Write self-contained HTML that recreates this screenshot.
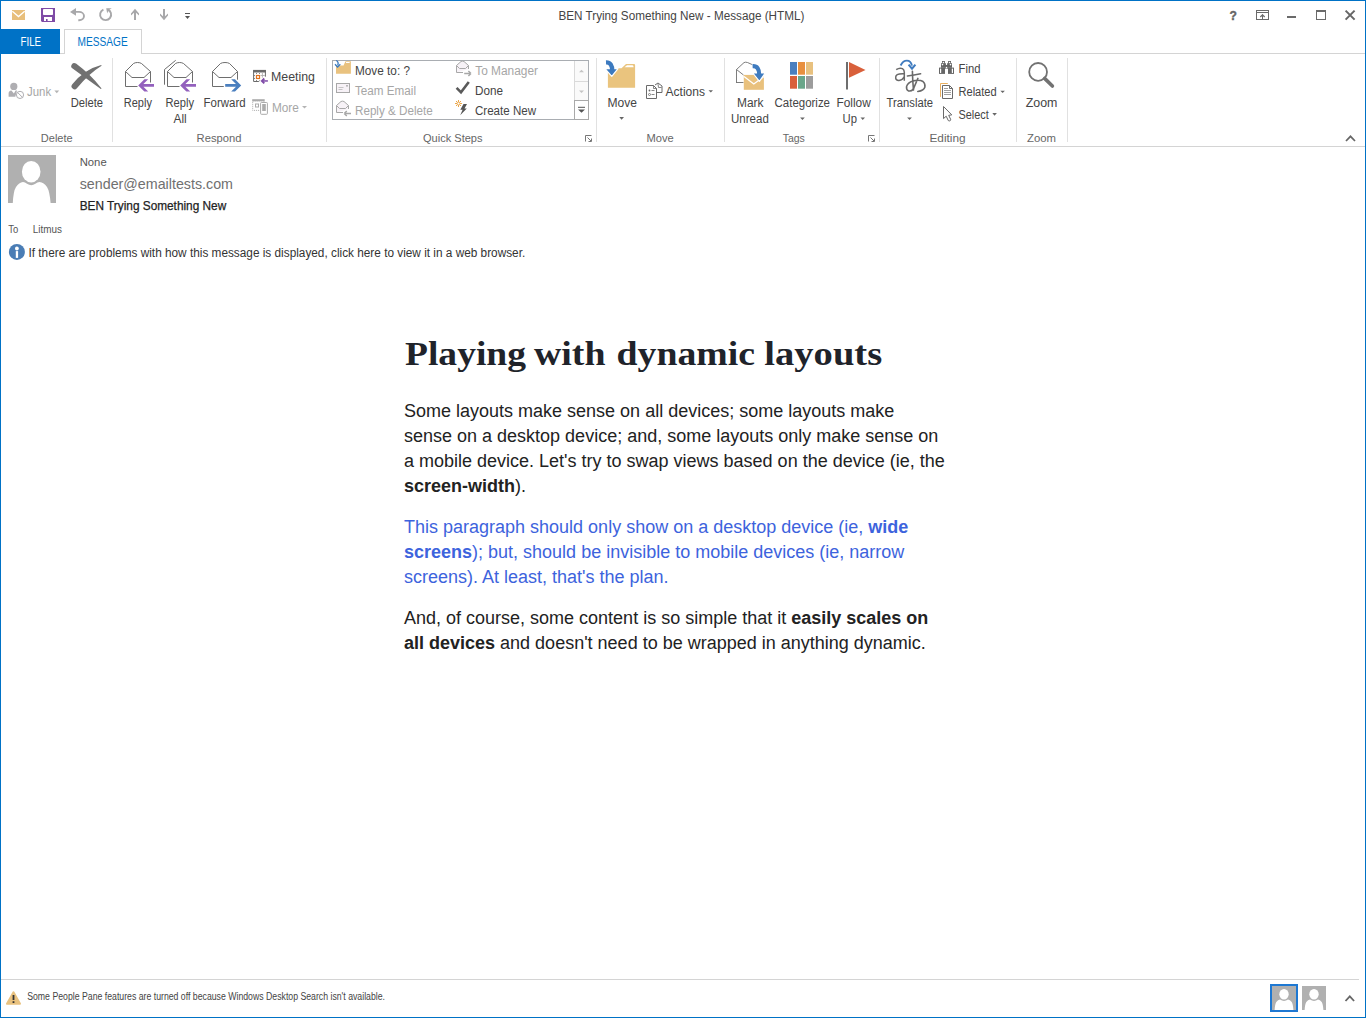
<!DOCTYPE html>
<html><head><meta charset="utf-8">
<style>
*{margin:0;padding:0;box-sizing:border-box}
html,body{width:1366px;height:1018px;overflow:hidden;background:#fff}
body{font-family:"Liberation Sans",sans-serif;position:relative;color:#444}
.a{position:absolute;white-space:nowrap}
.win{position:absolute;left:0;top:0;width:1366px;height:1018px;border:1px solid #0072c6}
.t12{font-size:12px;line-height:14px}
.dis{color:#a8a8a8}
.lbl{color:#666;font-size:12px;line-height:14px}
.sep{position:absolute;width:1px;background:#e1e1e1}
svg{position:absolute;overflow:visible}
</style></head><body>
<div class="win"></div>

<!-- ===== Title bar ===== -->

<!-- ===== Tabs ===== -->
<div class="a" style="left:1px;top:29px;width:59px;height:25px;background:#0072c6"></div>
<div class="a" style="left:64px;top:29px;width:78px;height:25px;border:1px solid #d4d4d4;border-bottom:none;background:#fff"></div>
<div class="a" style="left:60px;top:53px;width:4px;height:1px;background:#d4d4d4"></div>
<div class="a" style="left:142px;top:53px;width:1223px;height:1px;background:#d4d4d4"></div>

<!-- ===== Ribbon ===== -->
<div class="a" style="left:1px;top:146px;width:1364px;height:1px;background:#d4d4d4"></div>

<!-- ===== Message header ===== -->

<!-- ===== Body ===== -->
<div class="a" id="body" style="left:404px;top:330px;width:560px;white-space:normal">
<div id="p1" class="a" style="left:0;top:69px;font-size:18px;line-height:25px;color:#222">Some layouts make sense on all devices; some layouts make<br>sense on a desktop device; and, some layouts only make sense on<br>a mobile device. Let's try to swap views based on the device (ie, the<br><b>screen-width</b>).</div>
<div id="p2" class="a" style="left:0;top:185px;font-size:18px;line-height:25px;color:#3d63dd">This paragraph should only show on a desktop device (ie, <b>wide</b><br><b>screens</b>); but, should be invisible to mobile devices (ie, narrow<br>screens). At least, that's the plan.</div>
<div id="p3" class="a" style="left:0;top:276px;font-size:18px;line-height:25px;color:#222">And, of course, some content is so simple that it <b>easily scales on</b><br><b>all devices</b> and doesn't need to be wrapped in anything dynamic.</div>
</div>

<!-- ===== Footer ===== -->
<div class="a" style="left:1px;top:979px;width:1358px;height:1px;background:#d4d4d4"></div>

<!--ICONS-->
<svg width="1366" height="1018" style="left:0;top:0">
<!-- QAT mail -->
<rect x="12" y="10" width="13" height="10" fill="#e8bf7c"/>
<path d="M12.3 11.3 L18.5 16.6 L24.7 11.3" fill="none" stroke="#fff" stroke-width="1.3"/>
<!-- QAT save -->
<path d="M41 8 H55 V22 H42 L41 21 Z" fill="#7f4ba6"/>
<rect x="43" y="9" width="10" height="6" rx="0.8" fill="#fff"/>
<rect x="44" y="17" width="8" height="4" fill="#fff"/>
<rect x="46" y="19" width="1.6" height="2" fill="#7f4ba6"/>
<!-- undo -->
<path d="M72 11.9 H79 A5 4.2 0 0 1 79 20.3 H78.3" fill="none" stroke="#a8a8aa" stroke-width="1.9"/>
<path d="M70 11.9 L76 8 V15.8 Z" fill="#a8a8aa"/>
<!-- redo -->
<path d="M103.4 9.6 A5.5 5.5 0 1 0 107.6 9.5" fill="none" stroke="#a8a8aa" stroke-width="1.9"/>
<path d="M106.2 8.2 H111.8 L108.5 10.2 L107.2 13.6 Z" fill="#a8a8aa"/>
<!-- up -->
<path d="M135 10 V20" stroke="#a8a8aa" stroke-width="2"/>
<path d="M135 8.8 L139 13.6 V15.6 L135 11.8 L131 15.6 V13.6 Z" fill="#a8a8aa"/>
<!-- down -->
<path d="M164 9 V19" stroke="#a8a8aa" stroke-width="2"/>
<path d="M164 20.2 L168 15.4 V13.4 L164 17.2 L160 13.4 V15.4 Z" fill="#a8a8aa"/>
<!-- customize -->
<rect x="185" y="13" width="5" height="1" fill="#555"/>
<path d="M185 16 H190 L187.5 19 Z" fill="#555"/>
<!-- help ? -->
<text x="1229.6" y="20" font-family="Liberation Sans" font-weight="bold" font-size="13.5" fill="#666" stroke="#666" stroke-width="0.4" textLength="7.4" lengthAdjust="spacingAndGlyphs">?</text>
<!-- ribbon display -->
<rect x="1256.5" y="10.5" width="12" height="9" fill="none" stroke="#6a6a6a" stroke-width="1"/>
<path d="M1256.5 12.5 H1268.5" stroke="#6a6a6a" stroke-width="1"/>
<path d="M1262.5 14.5 V19.5" stroke="#6a6a6a" stroke-width="1"/>
<path d="M1260.3 17 L1262.5 14.8 L1264.7 17" fill="none" stroke="#6a6a6a" stroke-width="1.2"/>
<!-- minimize -->
<rect x="1287" y="16" width="9" height="2" fill="#6a6a6a"/>
<!-- maximize -->
<rect x="1316.5" y="10.5" width="9" height="9" fill="none" stroke="#6a6a6a" stroke-width="1"/>
<rect x="1316" y="10" width="10" height="2" fill="#6a6a6a"/>
<!-- close -->
<path d="M1345.6 10.6 L1354.6 19.6 M1354.6 10.6 L1345.6 19.6" stroke="#666" stroke-width="2"/>
<!-- ribbon separators -->
<rect x="112" y="58" width="1" height="84" fill="#e1e1e1"/>
<rect x="326" y="58" width="1" height="84" fill="#e1e1e1"/>
<rect x="596" y="58" width="1" height="84" fill="#e1e1e1"/>
<rect x="724" y="58" width="1" height="84" fill="#e1e1e1"/>
<rect x="879" y="58" width="1" height="84" fill="#e1e1e1"/>
<rect x="1016" y="58" width="1" height="84" fill="#e1e1e1"/>
<rect x="1067" y="58" width="1" height="84" fill="#e1e1e1"/>
<!-- Junk -->
<circle cx="13.8" cy="86.4" r="3.6" fill="#afaeb2"/>
<path d="M8.6 96.8 V93.6 Q8.6 90.6 11.4 90.4 L13.9 93.6 L15.6 90.6 H17 L15.3 96.8 Z" fill="#afaeb2"/>
<circle cx="20" cy="94.9" r="3.6" fill="#fff" stroke="#afaeb2" stroke-width="1"/>
<path d="M17.5 92.4 L22.5 97.4" stroke="#afaeb2" stroke-width="1"/>
<path d="M54.4 90.6 H59.2 L56.8 93.2 Z" fill="#b4b4b4"/>
<!-- Delete X -->
<path d="M76 63.6 Q90 74 101.6 88.4 L100.8 89 Q87 79.2 72.6 68.6 A2.7 2.7 0 0 1 76 63.6 Z" fill="#717171"/>
<path d="M72.3 84.3 Q84 69.3 101.2 64.9 L101.6 65.7 Q88.5 73.8 76.9 88.3 A2.8 2.8 0 0 1 72.3 84.3 Z" fill="#717171"/>
<!-- Reply -->
<g fill="none" stroke="#6e6e6e" stroke-width="1">
<path d="M125.5 86.5 V71.5 L133.5 63.5 Q135 62.5 137.5 62.5 Q140 62.5 141.5 63.5 L150.5 71.5 V82.5"/>
<path d="M125.5 71.5 L132 77.5 H144 L150.5 71.5"/>
<path d="M125.5 86.5 H137.5"/>
</g>
<path d="M138.2 85.4 L144.4 79.2 H148.2 L143.4 84 H154 V86.8 H143.4 L148.2 91.6 H144.4 Z" fill="#9360bd"/>
<!-- Reply All -->
<g fill="none" stroke="#6e6e6e" stroke-width="1">
<path d="M167.5 86.5 V71.5 L175.5 63.5 Q177 62.5 179.5 62.5 Q182 62.5 183.5 63.5 L192.5 71.5 V82.5"/>
<path d="M167.5 71.5 L174 77.5 H186 L192.5 71.5"/>
<path d="M167.5 86.5 H179.5"/>
<path d="M164.5 84.7 V69.5 L175.7 60.3"/>
</g>
<path d="M180.2 85.4 L186.4 79.2 H190.2 L185.4 84 H196 V86.8 H185.4 L190.2 91.6 H186.4 Z" fill="#9360bd"/>
<!-- Forward -->
<g fill="none" stroke="#6e6e6e" stroke-width="1">
<path d="M212.5 86.5 V71.5 L220.5 63.5 Q222 62.5 225 62.5 Q228 62.5 229.5 63.5 L237.5 71.5 V79.7"/>
<path d="M212.5 71.5 L219 77.5 H231 L237.5 71.5"/>
<path d="M212.5 86.5 H223.8"/>
</g>
<path d="M241.2 85.4 L235 79.2 H231.2 L236 84 H225.2 V86.8 H236 L231.2 91.6 H235 Z" fill="#4a7fbf"/>
<!-- Meeting -->
<path d="M253.6 81.5 V70.5 H265.4 V76.7" fill="none" stroke="#6a6a6a" stroke-width="1"/>
<rect x="253.1" y="69.9" width="12.8" height="2.6" fill="#6a6a6a"/>
<path d="M253.6 81.5 H258.8 L259.8 80.4" fill="none" stroke="#6a6a6a" stroke-width="1"/>
<g fill="#8a8a8a">
<rect x="256" y="73" width="1" height="1"/><rect x="259" y="73" width="1" height="1"/>
<rect x="254" y="75" width="1" height="1"/><rect x="254" y="78" width="1" height="1"/>
<rect x="256" y="80" width="1" height="1"/>
</g>
<path d="M262.4 73 V77.6 M260.6 75.5 H264.8" stroke="#b0b0b0" stroke-width="0.9"/>
<rect x="256.5" y="75.5" width="3" height="3" fill="none" stroke="#e2711d" stroke-width="1.2"/>
<path d="M264.3 78.5 L261.9 80.95 L264.3 83.4" fill="none" stroke="#7f4ba8" stroke-width="1.9" stroke-linejoin="miter"/>
<rect x="262.6" y="80.2" width="5.3" height="1.5" fill="#7f4ba8"/>
<!-- More -->
<rect x="252.2" y="99.2" width="12.5" height="2" fill="#ababab"/>
<rect x="252.7" y="101" width="11.5" height="9.4" fill="none" stroke="#ababab" stroke-width="1" stroke-dasharray="1 1"/>
<rect x="255.5" y="104" width="3" height="3" fill="none" stroke="#ababab" stroke-width="1"/>
<rect x="260.6" y="102.5" width="6.8" height="11.8" rx="0.8" fill="#fff" stroke="#ababab" stroke-width="1"/>
<rect x="262.2" y="104" width="3.6" height="7" fill="#ababab"/>
<path d="M302 106 H307 L304.5 108.6 Z" fill="#b4b4b4"/>
<!-- Quick steps gallery -->
<rect x="332.5" y="60.5" width="256" height="59" fill="none" stroke="#a9adb2" stroke-width="1"/>
<rect x="575" y="61" width="13" height="39" fill="#fafafa"/>
<path d="M574.5 61 V100" stroke="#dadada" stroke-width="1"/>
<path d="M575 81.5 H588" stroke="#dadada" stroke-width="1"/>
<rect x="574.5" y="100.5" width="14" height="19" fill="#fff" stroke="#a9a9a9" stroke-width="1"/>
<path d="M579 72.2 L581.5 69.7 L584 72.2 Z" fill="#c4c4c4"/>
<path d="M579 90.5 H584 L581.5 93 Z" fill="#c4c4c4"/>
<rect x="578" y="106.8" width="7" height="1" fill="#555"/>
<path d="M578 109.5 H585 L581.5 112.8 Z" fill="#555"/>
<!-- launcher QS -->
<path d="M585.5 141.5 V135.5 H591.5" fill="none" stroke="#777" stroke-width="1"/>
<path d="M587.5 137.5 L591 141 M591.5 138.5 V141.5 H588.5" fill="none" stroke="#777" stroke-width="1"/>
<!-- Move to: ? icon -->
<path d="M336 73.7 V65.5 H343.5 L345.5 61.2 H350.9 V73.7 Z" fill="#e9c27f"/>
<rect x="346" y="62" width="3.6" height="1" fill="#fff"/>
<path d="M336 60.5 Q339 61.5 337.8 65.3" fill="none" stroke="#3a7ac0" stroke-width="1.3"/>
<path d="M335 64.2 L337.6 67 L340.3 64.2" fill="none" stroke="#3a7ac0" stroke-width="1.3"/>
<!-- Team Email icon -->
<rect x="336.5" y="83.5" width="13" height="9" fill="#f7f2f7" stroke="#a8a8a8" stroke-width="1"/>
<path d="M338.5 87.5 H343.5 M338.5 89.5 H342.5" stroke="#b8b8b8" stroke-width="0.8"/>
<rect x="346.2" y="85" width="1.6" height="1.6" fill="#a8a8a8"/>
<!-- Reply & Delete icon -->
<path d="M336.5 112.5 V105.5 L341 101.5 Q342.5 100.8 344 101.5 L348.5 105.5 V109" fill="#f7f2f7" stroke="#a8a8a8" stroke-width="1"/>
<path d="M336.5 105.5 L339.5 108.5 H345.5 L348.5 105.5" fill="none" stroke="#a8a8a8" stroke-width="1"/>
<path d="M336.5 112.5 H343" stroke="#a8a8a8" stroke-width="1"/>
<path d="M344.2 113.5 L346.8 111 M344.2 113.5 L346.8 116 M344.8 113.5 H351" fill="none" stroke="#a8a8a8" stroke-width="1.5"/>
<!-- To Manager icon -->
<path d="M456.5 72.5 V65.5 L461 61.5 Q462.5 60.8 464 61.5 L468.5 65.5 V69" fill="#f7f2f7" stroke="#a8a8a8" stroke-width="1"/>
<path d="M456.5 65.5 L459.5 68.5 H465.5 L468.5 65.5" fill="none" stroke="#a8a8a8" stroke-width="1"/>
<path d="M456.5 72.5 H463" stroke="#a8a8a8" stroke-width="1"/>
<path d="M471 73.5 L468.4 71 M471 73.5 L468.4 76 M470.4 73.5 H464.2" fill="none" stroke="#a8a8a8" stroke-width="1.5"/>
<!-- Done -->
<path d="M456.6 87.8 L461 92.3 L468.8 82" fill="none" stroke="#5a5a5a" stroke-width="2.6"/>
<!-- Create New -->
<g stroke="#eaa64a" stroke-width="1">
<path d="M458.5 100 V107 M455 103.5 H462 M456 101 L461 106 M461 101 L456 106"/>
</g>
<circle cx="458.5" cy="103.5" r="1.5" fill="#fff" stroke="#eaa64a" stroke-width="0.9"/>
<path d="M463.5 104 H467 L464.5 108.5 H466.8 L460.2 115.2 L462.6 109.8 H460.3 Z" fill="#555"/>
<!-- Move icon -->
<path d="M607.9 87.8 V68.3 H621.5 L626 63.9 H634 Q635.1 63.9 635.1 65 V87.8 Z" fill="#eac47e"/>
<path d="M624.5 67.3 L627 65.2 H632.5 Q633.5 65.4 633.6 67.3 Z" fill="#fff"/>
<path d="M605.5 62 Q613.5 61.7 613.3 69.5" fill="none" stroke="#fff" stroke-width="6.4"/>
<path d="M605 68.6 L611.8 76.4 L618 68.6 Z" fill="#3c7abf" stroke="#fff" stroke-width="1.2" stroke-linejoin="round"/>
<path d="M606 62.4 Q612.4 62.2 612.2 71" fill="none" stroke="#3c7abf" stroke-width="4.4"/>
<path d="M619.3 117 H624 L621.6 119.7 Z" fill="#666"/>
<!-- Actions icon -->
<path d="M655 85 L658 83 L662 86 V92.5 H657" fill="none" stroke="#6a6a6a" stroke-width="1"/>
<path d="M658 84 L658.5 87.5 H661.5" fill="none" stroke="#6a6a6a" stroke-width="0.8"/>
<path d="M646.5 98.5 V85.5 H653.5 L656.5 88.5 V98.5 Z" fill="#fff" stroke="#6a6a6a" stroke-width="1"/>
<path d="M653.5 85.5 V88.5 H656.5" fill="none" stroke="#6a6a6a" stroke-width="0.8"/>
<circle cx="649.5" cy="90.5" r="0.9" fill="#6a6a6a"/>
<circle cx="649.5" cy="94.5" r="1" fill="none" stroke="#6a6a6a" stroke-width="0.8"/>
<path d="M651.5 90.5 H654.5 M651.5 94.5 H654.5" stroke="#6a6a6a" stroke-width="0.8"/>
<path d="M708.5 90.3 H713 L710.8 92.6 Z" fill="#666"/>
<!-- Mark Unread -->
<path d="M736.5 83 V69.5 L744 62.6 Q745.5 61.8 747.5 62.5 L752 64.5" fill="none" stroke="#6e6e6e" stroke-width="0.9"/>
<path d="M736.5 69.5 L743.5 75" fill="none" stroke="#6e6e6e" stroke-width="0.9"/>
<path d="M736.5 82.5 H743.5" stroke="#6e6e6e" stroke-width="0.9"/>
<rect x="743.8" y="74.9" width="20.1" height="14.9" fill="#e9c17d"/>
<path d="M744 76.5 L753.8 84 L764 76.5" fill="none" stroke="#fff" stroke-width="1.3"/>
<path d="M752 65.8 Q760.5 65.4 760 74" fill="none" stroke="#fff" stroke-width="6.2"/>
<path d="M752.8 73 L759.4 81.4 L765.2 73 Z" fill="#3f7bbf" stroke="#fff" stroke-width="1.2" stroke-linejoin="round"/>
<path d="M752.6 66.2 Q759.4 65.8 759.2 75" fill="none" stroke="#3f7bbf" stroke-width="4.2"/>
<!-- Categorize -->
<rect x="790" y="62" width="7" height="12.7" fill="#4a7fbf"/>
<rect x="798" y="62" width="7" height="12.7" fill="#e8903f"/>
<rect x="806" y="62" width="7" height="12.7" fill="#e8c17f"/>
<rect x="790" y="76" width="7" height="12.7" fill="#d9603b"/>
<rect x="798" y="76" width="7" height="12.7" fill="#6aa68a"/>
<rect x="806" y="76" width="7" height="12.7" fill="#9c9c9c"/>
<path d="M800.1 117.5 H804.8 L802.45 120 Z" fill="#666"/>
<!-- Follow up -->
<rect x="846" y="62" width="2" height="27.5" fill="#6e6e6e"/>
<path d="M849 62 L865.5 70 L849 77.7 Z" fill="#d9603b"/>
<path d="M860.5 117.5 H865 L862.75 120 Z" fill="#666"/>
<!-- launcher Tags -->
<path d="M868.5 141.5 V135.5 H874.5" fill="none" stroke="#777" stroke-width="1"/>
<path d="M870.5 137.5 L874 141 M874.5 138.5 V141.5 H871.5" fill="none" stroke="#777" stroke-width="1"/>
<!-- Translate -->
<g fill="none" stroke="#6a6a6a" stroke-width="1.5">
<path d="M896.2 69.6 Q899.5 67.4 902.5 68.6 Q904.3 69.6 904.3 72.2 V80.8"/>
<path d="M904.3 73.8 Q899.2 73.6 897.2 74.6 Q895.3 75.8 895.7 78.2 Q896.3 80.6 899 80.4 Q902.6 80.1 904.3 76.9"/>
</g>
<g fill="none" stroke="#6a6a6a" stroke-width="1.6" stroke-linecap="round">
<path d="M907.4 76 Q914 75.4 920.6 73.8"/>
<path d="M912.4 71.3 Q912.6 81 913.5 90"/>
<path d="M917.9 78.4 L913.2 89.4 Q911 91.6 908.4 90.9 Q906.1 89.7 906.6 86.4 Q907.8 82.3 913 80.9 Q919.5 79.5 923 81.5 Q925.4 83.5 924.9 87 Q924 90.6 917.8 91.5"/>
</g>
<path d="M900.6 65.5 Q903 60.6 906.9 60.6 Q910.8 60.6 912 65.6" fill="none" stroke="#3f7bbf" stroke-width="1.9"/>
<path d="M908.6 64.6 L912 68.6 L915.4 64.6" fill="none" stroke="#3f7bbf" stroke-width="2.1"/>
<path d="M907.1 117.4 H911.9 L909.5 119.9 Z" fill="#666"/>
<!-- Find binoculars -->
<g fill="#666">
<rect x="942" y="61" width="2.9" height="2.8"/>
<rect x="941" y="63.2" width="4.9" height="4.6"/>
<rect x="939" y="67.6" width="6" height="6.3"/>
<rect x="948.1" y="61" width="2.9" height="2.8"/>
<rect x="947.1" y="63.2" width="4.9" height="4.6"/>
<rect x="948" y="67.6" width="6" height="6.3"/>
<rect x="944.8" y="65" width="3.4" height="3.7"/>
</g>
<g fill="#fff">
<circle cx="943.4" cy="62.5" r="0.7"/>
<circle cx="942.5" cy="64.6" r="0.8"/>
<circle cx="949.6" cy="62.5" r="0.7"/>
<circle cx="950.5" cy="64.6" r="0.8"/>
<circle cx="946.5" cy="67.6" r="0.8"/>
<rect x="940" y="68.6" width="1.2" height="4.5" rx="0.5"/>
<rect x="951.8" y="68.6" width="1.2" height="4.5" rx="0.5"/>
</g>
<!-- Related -->
<path d="M940.5 96.9 V83.5 H947.8" fill="none" stroke="#eab060" stroke-width="1"/>
<path d="M942.5 98.5 V85.5 H949.5 L952.5 88.5 V98.5 Z" fill="#fff" stroke="#6a6a6a" stroke-width="1"/>
<path d="M949.5 85.5 V88.5 H952.5" fill="none" stroke="#6a6a6a" stroke-width="1"/>
<path d="M944 88.5 H948 M944 90.5 H951 M944 92.5 H951 M944 94.5 H951" stroke="#8a8a8a" stroke-width="0.8"/>
<path d="M1000.4 90.7 H1004.9 L1002.65 93.1 Z" fill="#666"/>
<!-- Select cursor -->
<path d="M943.5 106.5 V118.6 L946.2 116.2 L948.3 120.6 Q949.3 121.3 950.3 120.6 Q951 119.8 950.5 119 L948.7 115.3 L951.8 114.9 Z" fill="#fff" stroke="#6a6a6a" stroke-width="1" stroke-linejoin="round"/>
<path d="M992.3 113.1 H996.9 L994.6 115.8 Z" fill="#666"/>
<!-- Zoom -->
<circle cx="1038.1" cy="71.9" r="8.9" fill="none" stroke="#727272" stroke-width="1.8"/>
<path d="M1044.6 78.4 L1052.4 86" stroke="#727272" stroke-width="3.6" stroke-linecap="round"/>
<!-- collapse ribbon -->
<path d="M1346 141 L1350.5 136.3 L1355 141" fill="none" stroke="#666" stroke-width="1.7"/>
<!-- avatar -->
<rect x="8" y="155" width="48" height="48" fill="#b0b0b0"/>
<ellipse cx="31.2" cy="171.7" rx="9.3" ry="10.8" fill="#fff"/>
<path d="M12.8 203 Q13.4 191 16 187 Q19 182.3 23 182 Q25 182 27 183.8 Q31.2 186.6 35.4 183.8 Q37.4 182 39.5 182 Q44 182.3 47 187 Q49.6 191 50.6 203 Z" fill="#fff"/>
<!-- info icon -->
<circle cx="16.9" cy="251.9" r="8" fill="#4a7db5"/>
<circle cx="16.9" cy="248.5" r="1.9" fill="#fff"/>
<rect x="15.8" y="251.1" width="2.3" height="6.8" fill="#fff"/>
<!-- footer warning -->
<path d="M13.45 991.4 Q14 991.2 14.5 991.9 L21 1003.6 Q21.2 1004.6 20.2 1004.7 H6.7 Q5.7 1004.6 6 1003.6 L12.5 991.9 Q12.9 991.2 13.45 991.4 Z" fill="#e9c27f"/>
<rect x="12.6" y="995" width="1.8" height="5" fill="#333"/>
<rect x="12.6" y="1001.2" width="1.8" height="1.8" fill="#333"/>
<!-- footer avatars -->
<rect x="1271" y="985" width="26" height="26" fill="none" stroke="#1e78d2" stroke-width="2"/>
<rect x="1272" y="986" width="24" height="24" fill="#b0b0b0"/>
<ellipse cx="1284" cy="994.3" rx="4.7" ry="5.3" fill="#fff"/>
<path d="M1274.6 1010 Q1275 1004 1276.3 1002 Q1278 999.7 1280 999.5 Q1282 1000.9 1284 1000.9 Q1286 1000.9 1288 999.5 Q1290 999.7 1291.7 1002 Q1293 1004 1293.4 1010 Z" fill="#fff"/>
<rect x="1302" y="986" width="24" height="24" fill="#b0b0b0"/>
<ellipse cx="1314" cy="994.3" rx="4.7" ry="5.3" fill="#fff"/>
<path d="M1304.6 1010 Q1305 1004 1306.3 1002 Q1308 999.7 1310 999.5 Q1312 1000.9 1314 1000.9 Q1316 1000.9 1318 999.5 Q1320 999.7 1321.7 1002 Q1323 1004 1323.4 1010 Z" fill="#fff"/>
<path d="M1345.5 1001 L1349.8 996.3 L1354.1 1001" fill="none" stroke="#666" stroke-width="1.8"/>
</svg>
<!--/ICONS-->
<!--TXT--><svg id="txt" width="1366" height="1018" style="left:0;top:0" font-family="Liberation Sans, sans-serif">
<text x="558.4" y="20" font-size="12" fill="#444" textLength="246.0" lengthAdjust="spacingAndGlyphs">BEN Trying Something New - Message (HTML)</text>
<text x="20.5" y="46" font-size="12" fill="#fff" textLength="20.5" lengthAdjust="spacingAndGlyphs">FILE</text>
<text x="77.6" y="46" font-size="12" fill="#0072c6" textLength="50.2" lengthAdjust="spacingAndGlyphs">MESSAGE</text>
<text x="27.0" y="96" font-size="12" fill="#a6a6a6" textLength="24.1" lengthAdjust="spacingAndGlyphs">Junk</text>
<text x="70.7" y="107" font-size="12" fill="#444" textLength="32.4" lengthAdjust="spacingAndGlyphs">Delete</text>
<text x="40.8" y="142" font-size="11" fill="#666" textLength="31.9" lengthAdjust="spacingAndGlyphs">Delete</text>
<text x="123.8" y="107" font-size="12" fill="#444" textLength="28.1" lengthAdjust="spacingAndGlyphs">Reply</text>
<text x="165.5" y="107" font-size="12" fill="#444" textLength="28.5" lengthAdjust="spacingAndGlyphs">Reply</text>
<text x="173.5" y="123" font-size="12" fill="#444" textLength="13.2" lengthAdjust="spacingAndGlyphs">All</text>
<text x="203.6" y="107" font-size="12" fill="#444" textLength="42.0" lengthAdjust="spacingAndGlyphs">Forward</text>
<text x="271.0" y="81" font-size="12" fill="#444" textLength="44.0" lengthAdjust="spacingAndGlyphs">Meeting</text>
<text x="271.9" y="112" font-size="12" fill="#a6a6a6" textLength="26.9" lengthAdjust="spacingAndGlyphs">More</text>
<text x="196.6" y="142" font-size="11" fill="#666" textLength="44.8" lengthAdjust="spacingAndGlyphs">Respond</text>
<text x="355.0" y="75" font-size="12" fill="#444" textLength="55.0" lengthAdjust="spacingAndGlyphs">Move to: ?</text>
<text x="355.0" y="95" font-size="12" fill="#a6a6a6" textLength="61.0" lengthAdjust="spacingAndGlyphs">Team Email</text>
<text x="355.0" y="115" font-size="12" fill="#a6a6a6" textLength="77.7" lengthAdjust="spacingAndGlyphs">Reply &amp; Delete</text>
<text x="475.2" y="75" font-size="12" fill="#a6a6a6" textLength="62.8" lengthAdjust="spacingAndGlyphs">To Manager</text>
<text x="475.0" y="95" font-size="12" fill="#444" textLength="28.0" lengthAdjust="spacingAndGlyphs">Done</text>
<text x="475.0" y="115" font-size="12" fill="#444" textLength="61.0" lengthAdjust="spacingAndGlyphs">Create New</text>
<text x="423.0" y="142" font-size="11" fill="#666" textLength="59.5" lengthAdjust="spacingAndGlyphs">Quick Steps</text>
<text x="607.5" y="107" font-size="12" fill="#444" textLength="29.5" lengthAdjust="spacingAndGlyphs">Move</text>
<text x="665.5" y="96" font-size="12" fill="#444" textLength="39.5" lengthAdjust="spacingAndGlyphs">Actions</text>
<text x="646.5" y="142" font-size="11" fill="#666" textLength="27.2" lengthAdjust="spacingAndGlyphs">Move</text>
<text x="737.0" y="107" font-size="12" fill="#444" textLength="26.5" lengthAdjust="spacingAndGlyphs">Mark</text>
<text x="731.0" y="123" font-size="12" fill="#444" textLength="37.8" lengthAdjust="spacingAndGlyphs">Unread</text>
<text x="774.6" y="107" font-size="12" fill="#444" textLength="55.4" lengthAdjust="spacingAndGlyphs">Categorize</text>
<text x="836.5" y="107" font-size="12" fill="#444" textLength="34.3" lengthAdjust="spacingAndGlyphs">Follow</text>
<text x="842.6" y="123" font-size="12" fill="#444" textLength="14.4" lengthAdjust="spacingAndGlyphs">Up</text>
<text x="782.7" y="142" font-size="11" fill="#666" textLength="22.2" lengthAdjust="spacingAndGlyphs">Tags</text>
<text x="886.6" y="107" font-size="12" fill="#444" textLength="46.4" lengthAdjust="spacingAndGlyphs">Translate</text>
<text x="958.5" y="73" font-size="12" fill="#444" textLength="21.9" lengthAdjust="spacingAndGlyphs">Find</text>
<text x="958.5" y="96" font-size="12" fill="#444" textLength="38.2" lengthAdjust="spacingAndGlyphs">Related</text>
<text x="958.5" y="119" font-size="12" fill="#444" textLength="30.3" lengthAdjust="spacingAndGlyphs">Select</text>
<text x="929.5" y="142" font-size="11" fill="#666" textLength="36.1" lengthAdjust="spacingAndGlyphs">Editing</text>
<text x="1025.7" y="107" font-size="12" fill="#444" textLength="31.7" lengthAdjust="spacingAndGlyphs">Zoom</text>
<text x="1027.0" y="142" font-size="11" fill="#666" textLength="29.0" lengthAdjust="spacingAndGlyphs">Zoom</text>
<text x="79.7" y="166" font-size="10.5" fill="#555" textLength="27.0" lengthAdjust="spacingAndGlyphs">None</text>
<text x="79.7" y="189" font-size="14.5" fill="#707070" textLength="153.3" lengthAdjust="spacingAndGlyphs">sender@emailtests.com</text>
<text x="79.7" y="210" font-size="12.4" fill="#222" stroke="#222" stroke-width="0.25" textLength="146.5" lengthAdjust="spacingAndGlyphs">BEN Trying Something New</text>
<text x="8.2" y="233" font-size="10" fill="#555" textLength="10.0" lengthAdjust="spacingAndGlyphs">To</text>
<text x="32.7" y="233" font-size="10" fill="#555" textLength="29.2" lengthAdjust="spacingAndGlyphs">Litmus</text>
<text x="28.5" y="257" font-size="12" fill="#333" textLength="496.7" lengthAdjust="spacingAndGlyphs">If there are problems with how this message is displayed, click here to view it in a web browser.</text>
<text x="405.0" y="365" font-size="33" fill="#20232a" font-family="Liberation Serif" font-weight="bold" textLength="121.0" lengthAdjust="spacingAndGlyphs">Playing</text>
<text x="534.0" y="365" font-size="33" fill="#20232a" font-family="Liberation Serif" font-weight="bold" textLength="71.5" lengthAdjust="spacingAndGlyphs">with</text>
<text x="616.5" y="365" font-size="33" fill="#20232a" font-family="Liberation Serif" font-weight="bold" textLength="138.5" lengthAdjust="spacingAndGlyphs">dynamic</text>
<text x="764.3" y="365" font-size="33" fill="#20232a" font-family="Liberation Serif" font-weight="bold" textLength="117.9" lengthAdjust="spacingAndGlyphs">layouts</text>
<text x="27.2" y="1000" font-size="10" fill="#444" textLength="357.8" lengthAdjust="spacingAndGlyphs">Some People Pane features are turned off because Windows Desktop Search isn&#x27;t available.</text>
</svg><!--/TXT-->
</body></html>
